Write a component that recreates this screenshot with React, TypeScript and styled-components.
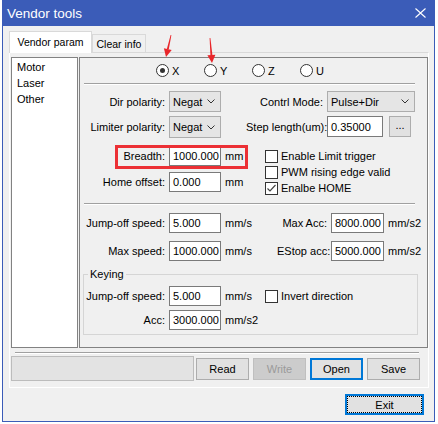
import React from "react";
import styled, { createGlobalStyle } from "styled-components";

const GlobalStyle = createGlobalStyle`
  html, body {
    margin: 0;
    padding: 0;
    background: #ffffff;
  }
  body {
    font-family: "Liberation Sans", Arial, sans-serif;
    font-size: 11px;
    color: #000;
  }
`;

const Screen = styled.div`
  position: relative;
  width: 438px;
  height: 424px;
  overflow: hidden;
`;

const Window = styled.div`
  margin-left: 2px;
  width: 433px;
  height: 422px;
  box-sizing: border-box;
  border: 1px solid #3b5cb8;
  border-top: none;
  background: #f0f0f0;
  display: flex;
  flex-direction: column;
`;

const TitleBar = styled.div`
  height: 26px;
  flex-shrink: 0;
  background: #3b5cb8;
  color: #fff;
  display: flex;
  align-items: center;
  justify-content: space-between;
  padding: 0 8px 0 4px;
  font-size: 13.5px;
`;

const Body = styled.div`
  padding: 5px 0 0 6px;
  display: flex;
  flex-direction: column;
`;

const TabStrip = styled.div`
  height: 21px;
  display: flex;
  align-items: flex-end;
`;

const Tab = styled.div<{ $active?: boolean; $w: number }>`
  position: relative;
  z-index: 1;
  box-sizing: border-box;
  width: ${(p) => p.$w}px;
  height: ${(p) => (p.$active ? 22 : 18)}px;
  margin-bottom: ${(p) => (p.$active ? -1 : 0)}px;
  border: 1px solid #d9d9d9;
  border-bottom: none;
  background: ${(p) => (p.$active ? "#ffffff" : "#f0f0f0")};
  font-size: 10.5px;
  display: flex;
  align-items: center;
  justify-content: center;
  padding-bottom: ${(p) => (p.$active ? 1 : 0)}px;
`;

const Panel = styled.div`
  box-sizing: border-box;
  width: 420px;
  height: 336px;
  border: 1px solid #ffffff;
  border-top-color: #d9d9d9;
  padding: 4px 0 0 1px;
  display: flex;
  flex-direction: column;
`;

const TopArea = styled.div`
  display: flex;
  gap: 1px;
`;

const ListBox = styled.div`
  box-sizing: border-box;
  width: 67px;
  height: 291px;
  border: 1px solid #828282;
  background: #fff;
  padding: 1px 0 0 5px;
`;

const ListItem = styled.div`
  line-height: 16px;
`;

const Group = styled.div`
  box-sizing: border-box;
  width: 349px;
  height: 291px;
  border: 1px solid #828282;
  display: flex;
  flex-direction: column;
`;

const RadioRow = styled.div`
  height: 25px;
  flex-shrink: 0;
  padding-left: 76px;
  display: flex;
  align-items: center;
`;

const RadioItem = styled.label`
  width: 48px;
  display: flex;
  align-items: center;
  gap: 3px;
`;

const RadioCircle = styled.span<{ $checked?: boolean }>`
  position: relative;
  box-sizing: border-box;
  width: 13px;
  height: 13px;
  border: 1px solid #333;
  border-radius: 50%;
  background: #fff;
  &::after {
    content: "";
    display: ${(p) => (p.$checked ? "block" : "none")};
    position: absolute;
    left: 3px;
    top: 3px;
    width: 5px;
    height: 5px;
    border-radius: 50%;
    background: #333;
  }
`;

const Separator = styled.div<{ $ml: number; $mr: number; $mt?: number }>`
  flex-shrink: 0;
  height: 0;
  border-top: 1px solid #a0a0a0;
  border-bottom: 1px solid #ffffff;
  margin: ${(p) => p.$mt ?? 0}px ${(p) => p.$mr}px 0 ${(p) => p.$ml}px;
`;

const Section = styled.div<{ $h?: number }>`
  display: flex;
  flex-direction: ${(p) => (p.$h ? "row" : "column")};
  height: ${(p) => (p.$h ? `${p.$h}px` : "auto")};
  flex-shrink: 0;
`;

const Column = styled.div<{ $w?: number }>`
  display: flex;
  flex-direction: column;
  width: ${(p) => (p.$w ? `${p.$w}px` : "auto")};
  flex: ${(p) => (p.$w ? "none" : "1")};
`;

const Row = styled.div<{ $mt: number; $h?: number }>`
  display: flex;
  align-items: center;
  gap: 4px;
  height: ${(p) => p.$h ?? 20}px;
  margin-top: ${(p) => p.$mt}px;
  flex-shrink: 0;
`;

const Label = styled.span<{ $w: number }>`
  width: ${(p) => p.$w}px;
  flex-shrink: 0;
  text-align: right;
  white-space: nowrap;
`;

const Unit = styled.span<{ $w?: number }>`
  width: ${(p) => (p.$w ? `${p.$w}px` : "auto")};
  flex-shrink: 0;
  white-space: nowrap;
`;

const TextBox = styled.div<{ $w: number }>`
  box-sizing: border-box;
  width: ${(p) => p.$w}px;
  height: 100%;
  flex-shrink: 0;
  background: #fff;
  border: 1px solid #7a7a7a;
  padding-left: 3px;
  display: flex;
  align-items: center;
  white-space: nowrap;
  overflow: hidden;
`;

const Combo = styled.div<{ $w: number }>`
  box-sizing: border-box;
  width: ${(p) => p.$w}px;
  height: 100%;
  flex-shrink: 0;
  background: #e5e5e5;
  border: 1px solid #adadad;
  padding: 0 5px 0 3px;
  display: flex;
  align-items: center;
  justify-content: space-between;
  white-space: nowrap;
`;

const MiniButton = styled.div`
  box-sizing: border-box;
  width: 22px;
  height: 21px;
  margin-left: 2px;
  background: #e1e1e1;
  border: 1px solid #adadad;
  display: flex;
  align-items: center;
  justify-content: center;
  padding-bottom: 3px;
`;

const CheckList = styled.div`
  margin-top: 11px;
  padding-left: 19px;
`;

const CheckRow = styled.label`
  height: 16px;
  display: flex;
  align-items: center;
  gap: 3px;
  white-space: nowrap;
`;

const CheckBox = styled.span`
  box-sizing: border-box;
  width: 13px;
  height: 13px;
  flex-shrink: 0;
  border: 1px solid #333;
  background: #fff;
  display: flex;
  align-items: center;
  justify-content: center;
`;

const Keying = styled.fieldset`
  box-sizing: border-box;
  width: 335px;
  margin: 7px 0 0 3px;
  padding: 0 0 4px 0;
  border: 1px solid #d5d5d5;
  min-width: 0;
`;

const Legend = styled.legend`
  font-size: 11px;
  line-height: 13px;
  padding: 0 2px;
  margin-left: 4px;
`;

const ButtonRow = styled.div`
  display: flex;
  align-items: center;
  margin-top: 2px;
`;

const StatusBox = styled.div`
  box-sizing: border-box;
  width: 183px;
  height: 25px;
  background: #e3e3e3;
  border: 1px solid #bcbcbc;
`;

const ButtonGroup = styled.div`
  display: flex;
  gap: 4px;
  margin-left: 2px;
`;

const Button = styled.div<{ $variant?: "default" | "disabled" | "focus"; $w: number; $h: number }>`
  position: relative;
  box-sizing: border-box;
  width: ${(p) => p.$w}px;
  height: ${(p) => p.$h}px;
  display: flex;
  align-items: center;
  justify-content: center;
  background: ${(p) => (p.$variant === "disabled" ? "#cccccc" : "#e1e1e1")};
  color: ${(p) => (p.$variant === "disabled" ? "#9a9a9a" : "#000")};
  border: ${(p) =>
    p.$variant === "default" || p.$variant === "focus"
      ? "2px solid #0078d7"
      : p.$variant === "disabled"
      ? "1px solid #bfbfbf"
      : "1px solid #adadad"};
  &::after {
    content: "";
    display: ${(p) => (p.$variant === "focus" ? "block" : "none")};
    position: absolute;
    inset: 0;
    border: 1px dotted #000;
  }
`;

const Footer = styled.div`
  display: flex;
  justify-content: flex-end;
  padding-right: 10px;
  margin-top: 6px;
`;

const RedBox = styled.div`
  position: absolute;
  left: 115px;
  top: 145px;
  width: 133px;
  height: 24px;
  box-sizing: border-box;
  border: 3px solid #ec3035;
  pointer-events: none;
`;

const Overlay = styled.svg`
  position: absolute;
  left: 0;
  top: 0;
  pointer-events: none;
`;

const Chevron = () => (
  <svg width="8" height="5" viewBox="0 0 8 5">
    <polyline points="0.5,0.5 4,4 7.5,0.5" fill="none" stroke="#333" strokeWidth="1" />
  </svg>
);

const Check = () => (
  <svg width="11" height="11" viewBox="0 0 11 11">
    <polyline points="1.5,5.5 4,8 9.5,2" fill="none" stroke="#444" strokeWidth="1.2" />
  </svg>
);

const Radio = ({ label, checked }: { label: string; checked?: boolean }) => (
  <RadioItem>
    <RadioCircle $checked={checked} />
    {label}
  </RadioItem>
);

const Arrow = ({ tail, tip, base }: { tail: number[]; tip: number[]; base: number[][] }) => {
  const mid = [(base[0][0] + base[1][0]) / 2, (base[0][1] + base[1][1]) / 2];
  return (
    <g fill="#e8262a" stroke="none">
      <polygon
        points={`${tail[0] - 0.4},${tail[1]} ${tail[0] + 0.4},${tail[1]} ${mid[0] + 1},${mid[1]} ${mid[0] - 1},${mid[1]}`}
      />
      <polygon points={`${base[0][0]},${base[0][1]} ${tip[0]},${tip[1]} ${base[1][0]},${base[1][1]}`} />
    </g>
  );
};

export default function App() {
  return (
    <Screen>
      <GlobalStyle />
      <Window>
        <TitleBar>
          <span>Vendor tools</span>
          <svg width="11" height="10" viewBox="0 0 11 10">
            <path d="M0.5 0.5 L10.5 9.5 M10.5 0.5 L0.5 9.5" stroke="#fff" strokeWidth="1.1" />
          </svg>
        </TitleBar>
        <Body>
          <TabStrip>
            <Tab $active $w={83}>Vendor param</Tab>
            <Tab $w={54}>Clear info</Tab>
          </TabStrip>
          <Panel>
            <TopArea>
              <ListBox>
                <ListItem>Motor</ListItem>
                <ListItem>Laser</ListItem>
                <ListItem>Other</ListItem>
              </ListBox>
              <Group>
                <RadioRow>
                  <Radio label="X" checked />
                  <Radio label="Y" />
                  <Radio label="Z" />
                  <Radio label="U" />
                </RadioRow>
                <Separator $ml={4} $mr={12} />
                <Section $h={118}>
                  <Column $w={166}>
                    <Row $mt={6} $h={21}>
                      <Label $w={85}>Dir polarity:</Label>
                      <Combo $w={52}>
                        Negat
                        <Chevron />
                      </Combo>
                    </Row>
                    <Row $mt={4} $h={22}>
                      <Label $w={85}>Limiter polarity:</Label>
                      <Combo $w={52}>
                        Negat
                        <Chevron />
                      </Combo>
                    </Row>
                    <Row $mt={8}>
                      <Label $w={85}>Breadth:</Label>
                      <TextBox $w={52}>1000.000</TextBox>
                      <Unit>mm</Unit>
                    </Row>
                    <Row $mt={6}>
                      <Label $w={85}>Home offset:</Label>
                      <TextBox $w={52}>0.000</TextBox>
                      <Unit>mm</Unit>
                    </Row>
                  </Column>
                  <Column>
                    <Row $mt={6} $h={21}>
                      <Label $w={77}>Contrl Mode:</Label>
                      <Combo $w={88}>
                        Pulse+Dir
                        <Chevron />
                      </Combo>
                    </Row>
                    <Row $mt={4} $h={21}>
                      <Label $w={77}>Step length(um):</Label>
                      <TextBox $w={56}>0.35000</TextBox>
                      <MiniButton>...</MiniButton>
                    </Row>
                    <CheckList>
                      <CheckRow>
                        <CheckBox />
                        Enable Limit trigger
                      </CheckRow>
                      <CheckRow>
                        <CheckBox />
                        PWM rising edge valid
                      </CheckRow>
                      <CheckRow>
                        <CheckBox>
                          <Check />
                        </CheckBox>
                        Enalbe HOME
                      </CheckRow>
                    </CheckList>
                  </Column>
                </Section>
                <Separator $ml={4} $mr={12} />
                <Section>
                  <Row $mt={8}>
                    <Label $w={85}>Jump-off speed:</Label>
                    <TextBox $w={52}>5.000</TextBox>
                    <Unit $w={48}>mm/s</Unit>
                    <Label $w={50}>Max Acc:</Label>
                    <TextBox $w={53}>8000.000</TextBox>
                    <Unit>mm/s2</Unit>
                  </Row>
                  <Row $mt={8}>
                    <Label $w={85}>Max speed:</Label>
                    <TextBox $w={52}>1000.000</TextBox>
                    <Unit $w={48}>mm/s</Unit>
                    <Label $w={50}>EStop acc:</Label>
                    <TextBox $w={53}>5000.000</TextBox>
                    <Unit>mm/s2</Unit>
                  </Row>
                  <Keying>
                    <Legend>Keying</Legend>
                    <Row $mt={5}>
                      <Label $w={81}>Jump-off speed:</Label>
                      <TextBox $w={52}>5.000</TextBox>
                      <Unit $w={36}>mm/s</Unit>
                      <CheckRow>
                        <CheckBox />
                        Invert direction
                      </CheckRow>
                    </Row>
                    <Row $mt={4}>
                      <Label $w={81}>Acc:</Label>
                      <TextBox $w={52}>3000.000</TextBox>
                      <Unit>mm/s2</Unit>
                    </Row>
                  </Keying>
                </Section>
              </Group>
            </TopArea>
            <Separator $ml={4} $mr={9} $mt={4} />
            <ButtonRow>
              <StatusBox />
              <ButtonGroup>
                <Button $w={53} $h={22}>Read</Button>
                <Button $w={53} $h={22} $variant="disabled">Write</Button>
                <Button $w={53} $h={22} $variant="default">Open</Button>
                <Button $w={53} $h={22}>Save</Button>
              </ButtonGroup>
            </ButtonRow>
          </Panel>
          <Footer>
            <Button $w={79} $h={21} $variant="focus">Exit</Button>
          </Footer>
        </Body>
      </Window>
      <RedBox />
      <Overlay width="438" height="424" viewBox="0 0 438 424">
        <Arrow tail={[171, 35]} tip={[166, 57]} base={[[171.7, 50.1], [163.9, 48.3]]} />
        <Arrow tail={[210, 38]} tip={[212, 63]} base={[[215.4, 54.7], [207.4, 55.3]]} />
      </Overlay>
    </Screen>
  );
}
